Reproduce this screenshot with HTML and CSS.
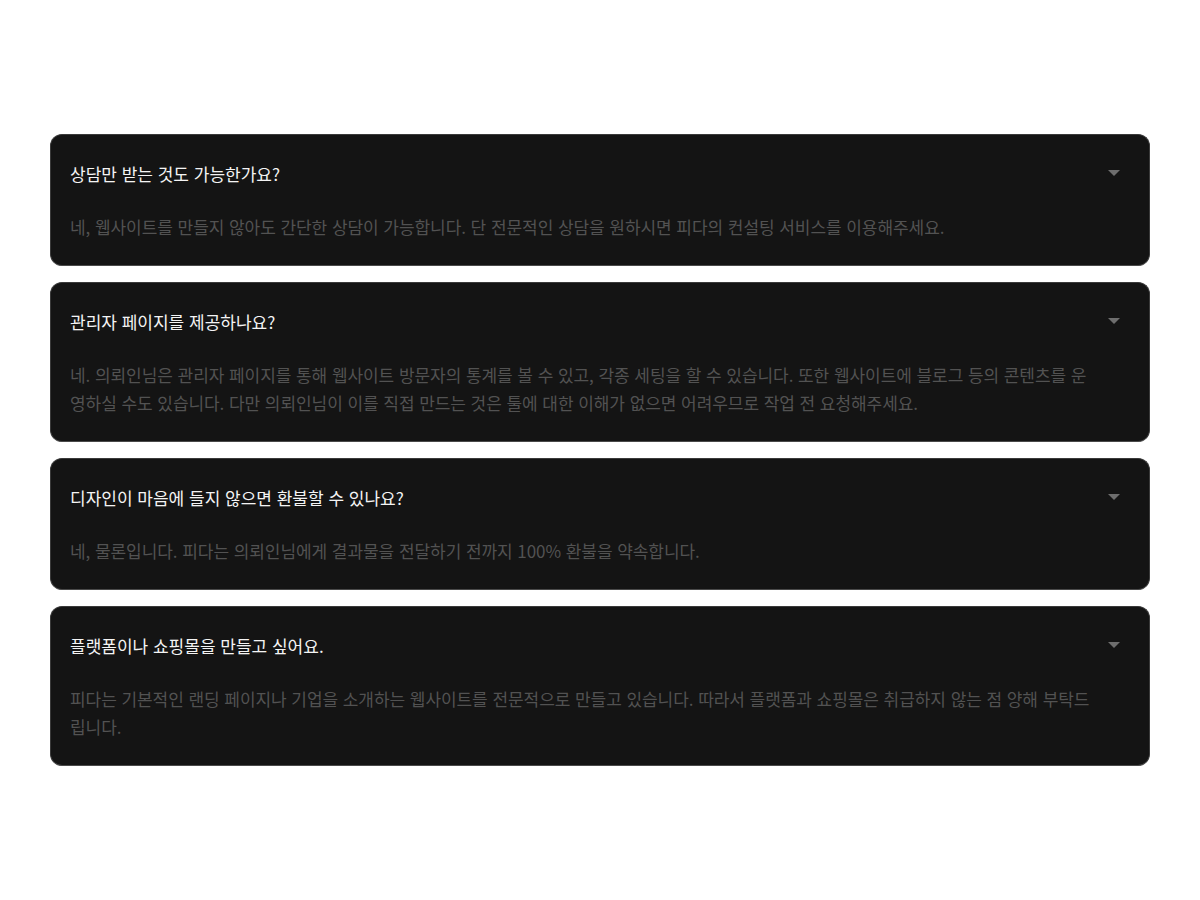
FILE: index.html
```html
<!DOCTYPE html>
<html lang="ko">
<head>
<meta charset="utf-8">
<title>FAQ</title>
<link rel="stylesheet" href="styles.css">
</head>
<body>
<section class="faq">
  <div class="item">
    <div class="q"><span class="q-text">상담만 받는 것도 가능한가요?</span><span class="arrow"></span></div>
    <p class="a">네, 웹사이트를 만들지 않아도 간단한 상담이 가능합니다. 단 전문적인 상담을 원하시면 피다의 컨설팅 서비스를 이용해주세요.</p>
  </div>
  <div class="item">
    <div class="q"><span class="q-text">관리자 페이지를 제공하나요?</span><span class="arrow"></span></div>
    <p class="a">네. 의뢰인님은 관리자 페이지를 통해 웹사이트 방문자의 통계를 볼 수 있고, 각종 세팅을 할 수 있습니다. 또한 웹사이트에 블로그 등의 콘텐츠를 운영하실 수도 있습니다. 다만 의뢰인님이 이를 직접 만드는 것은 툴에 대한 이해가 없으면 어려우므로 작업 전 요청해주세요.</p>
  </div>
  <div class="item">
    <div class="q"><span class="q-text">디자인이 마음에 들지 않으면 환불할 수 있나요?</span><span class="arrow"></span></div>
    <p class="a">네, 물론입니다. 피다는 의뢰인님에게 결과물을 전달하기 전까지 100% 환불을 약속합니다.</p>
  </div>
  <div class="item">
    <div class="q"><span class="q-text">플랫폼이나 쇼핑몰을 만들고 싶어요.</span><span class="arrow"></span></div>
    <p class="a">피다는 기본적인 랜딩 페이지나 기업을 소개하는 웹사이트를 전문적으로 만들고 있습니다. 따라서 플랫폼과 쇼핑몰은 취급하지 않는 점 양해 부탁드립니다.</p>
  </div>
</section>
</body>
</html>
```
FILE: styles.css
```css
html, body {
  margin: 0;
  padding: 0;
  background: #ffffff;
}
body {
  font-family: "Noto Sans CJK KR", "Noto Sans", sans-serif;
}
.faq {
  width: 1100px;
  margin: 134px auto 0;
  display: flex;
  flex-direction: column;
  gap: 16px;
}
.item {
  background: #141414;
  border: 1px solid #3a3a3a;
  border-bottom-color: #4a4a4a;
  border-radius: 12px;
  padding: 23px 20px 24px 19px;
}
.q {
  display: flex;
  align-items: center;
  justify-content: space-between;
  height: 30px;
}
.q-text {
  color: #f4f4f4;
  font-size: 17px;
  font-weight: 400;
}
.arrow {
  width: 0;
  height: 0;
  border-left: 6px solid transparent;
  border-right: 6px solid transparent;
  border-top: 6px solid #6e6e6e;
  margin-right: 9px;
}
.a {
  margin: 25px 0 0;
  padding-right: 34px;
  color: #525252;
  font-size: 17px;
  line-height: 28px;
  letter-spacing: -0.06px;
}
```
